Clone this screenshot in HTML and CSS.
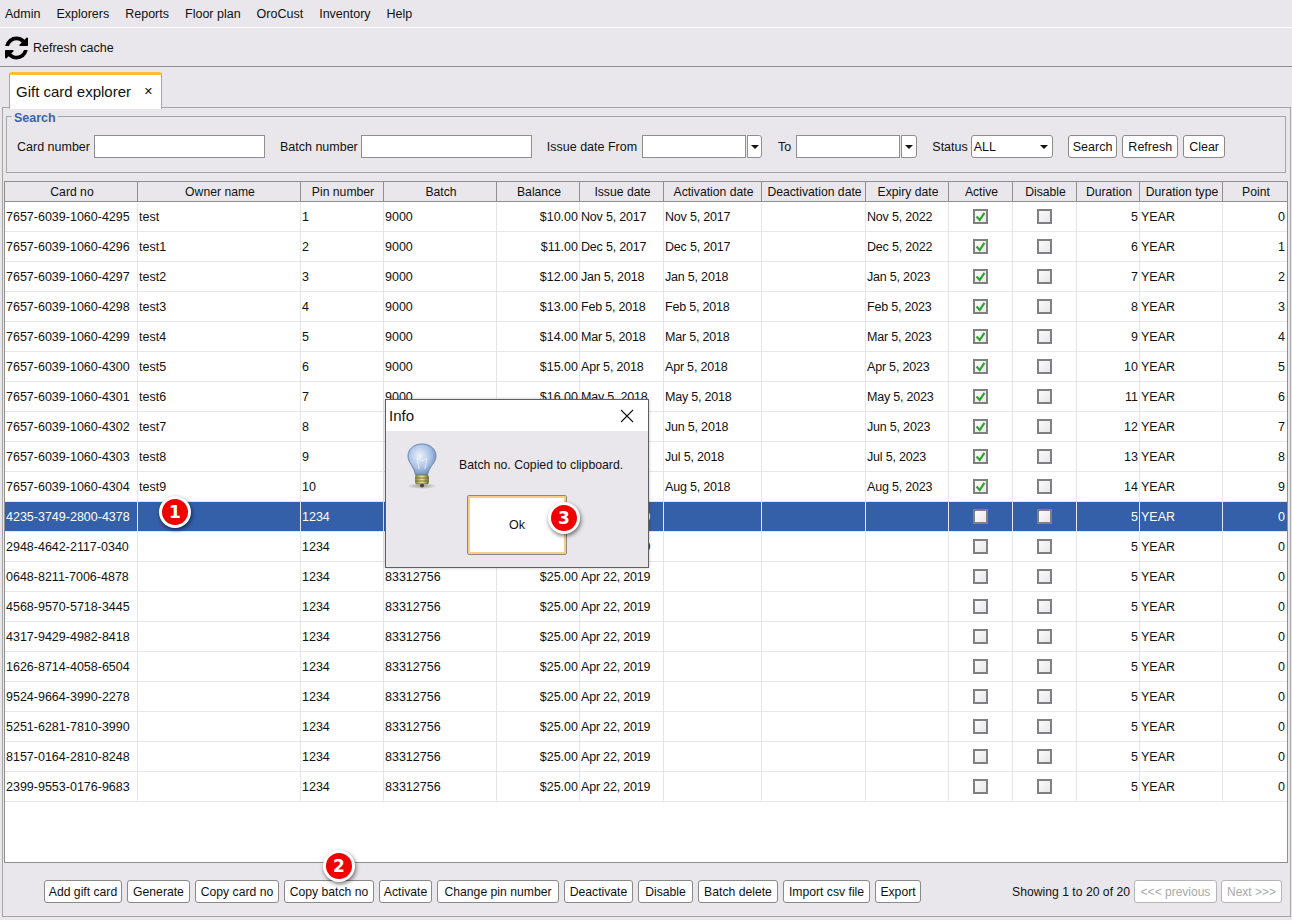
FILE: index.html
```html
<!DOCTYPE html>
<html>
  <head>
    <title>Gift card explorer</title>
    <link rel="stylesheet" href="styles.css">
  </head>
  <body>
    <svg class="defs" width="0" height="0">
      <symbol id="tick" viewBox="0 0 14 14">
        <path d="M2 7 L6 11.500 L12 2.500" fill="none" stroke="#2fa52f" stroke-width="2.8"/>
      </symbol>
    </svg>

    <div class="menubar">
      <span>Admin</span>
      <span>Explorers</span>
      <span>Reports</span>
      <span>Floor plan</span>
      <span>OroCust</span>
      <span>Inventory</span>
      <span>Help</span>
    </div>

    <div class="toolbar">
      <svg class="refresh-icon" viewBox="128 128 1536 1536">
        <path d="M1639 1056q0 5-1 7-64 268-268 434.5t-478 166.5q-146 0-282.5-55t-243.5-157l-129 129q-19 19-45 19t-45-19-19-45v-448q0-26 19-45t45-19h448q26 0 45 19t19 45-19 45l-137 137q71 66 161 102t187 36q134 0 250-65t186-179q11-17 53-117 8-23 30-23h192q13 0 22.5 9.5t9.5 22.5zm25-800v448q0 26-19 45t-45 19h-448q-26 0-45-19t-19-45 19-45l138-138q-148-137-349-137-134 0-250 65t-186 179q-11 17-53 117-8 23-30 23h-199q-13 0-22.5-9.5t-9.5-22.5v-7q65-268 270-434.5t480-166.5q146 0 284 55.5t245 156.5l130-129q19-19 45-19t45 19 19 45z"/>
      </svg>
      <span>Refresh cache</span>
    </div>

    <div class="tabs">
      <div class="tab">
        <span>Gift card explorer</span>
        <span class="tab-close">✕</span>
      </div>
    </div>

    <div class="tab-panel">
      <fieldset class="search">
        <legend>Search</legend>
        <div class="search-row">
          <label>Card number</label>
          <input type="text" class="input w-card">
          <label class="ml-15 tight">Batch number</label>
          <input type="text" class="input w-card">
          <label class="ml-15 loose">Issue date From</label>
          <div class="date-field">
            <input type="text" class="input w-date">
            <span class="drop"><i class="caret"></i></span>
          </div>
          <label class="ml-16 loose">To</label>
          <div class="date-field">
            <input type="text" class="input w-date">
            <span class="drop wide"><i class="caret"></i></span>
          </div>
          <label class="ml-15 tight">Status</label>
          <div class="select">ALL<i class="caret"></i></div>
          <button class="btn ml-15 btn-search">Search</button>
          <button class="btn">Refresh</button>
          <button class="btn">Clear</button>
        </div>
      </fieldset>

      <div class="table-box">
        <table class="grid">
          <colgroup>
            <col class="c1"><col class="c2"><col class="c3"><col class="c4"><col class="c5"><col class="c6"><col class="c7">
            <col class="c8"><col class="c9"><col class="c10"><col class="c11"><col class="c12"><col class="c13"><col class="c14">
          </colgroup>
          <thead>
            <tr>
              <th>Card no</th><th>Owner name</th><th>Pin number</th><th>Batch</th><th>Balance</th><th>Issue date</th><th>Activation date</th>
              <th>Deactivation date</th><th>Expiry date</th><th>Active</th><th>Disable</th><th>Duration</th><th>Duration type</th><th>Point</th>
            </tr>
          </thead>
          <tbody>
            <tr><td>7657-6039-1060-4295</td><td>test</td><td>1</td><td>9000</td><td class="r">$10.00</td><td class="d">Nov 5, 2017</td><td class="d">Nov 5, 2017</td><td></td><td class="d">Nov 5, 2022</td><td class="c"><span class="chk"><svg><use href="#tick"/></svg></span></td><td class="c"><span class="chk"></span></td><td class="r">5</td><td>YEAR</td><td class="r">0</td></tr>
            <tr><td>7657-6039-1060-4296</td><td>test1</td><td>2</td><td>9000</td><td class="r">$11.00</td><td class="d">Dec 5, 2017</td><td class="d">Dec 5, 2017</td><td></td><td class="d">Dec 5, 2022</td><td class="c"><span class="chk"><svg><use href="#tick"/></svg></span></td><td class="c"><span class="chk"></span></td><td class="r">6</td><td>YEAR</td><td class="r">1</td></tr>
            <tr><td>7657-6039-1060-4297</td><td>test2</td><td>3</td><td>9000</td><td class="r">$12.00</td><td class="d">Jan 5, 2018</td><td class="d">Jan 5, 2018</td><td></td><td class="d">Jan 5, 2023</td><td class="c"><span class="chk"><svg><use href="#tick"/></svg></span></td><td class="c"><span class="chk"></span></td><td class="r">7</td><td>YEAR</td><td class="r">2</td></tr>
            <tr><td>7657-6039-1060-4298</td><td>test3</td><td>4</td><td>9000</td><td class="r">$13.00</td><td class="d">Feb 5, 2018</td><td class="d">Feb 5, 2018</td><td></td><td class="d">Feb 5, 2023</td><td class="c"><span class="chk"><svg><use href="#tick"/></svg></span></td><td class="c"><span class="chk"></span></td><td class="r">8</td><td>YEAR</td><td class="r">3</td></tr>
            <tr><td>7657-6039-1060-4299</td><td>test4</td><td>5</td><td>9000</td><td class="r">$14.00</td><td class="d">Mar 5, 2018</td><td class="d">Mar 5, 2018</td><td></td><td class="d">Mar 5, 2023</td><td class="c"><span class="chk"><svg><use href="#tick"/></svg></span></td><td class="c"><span class="chk"></span></td><td class="r">9</td><td>YEAR</td><td class="r">4</td></tr>
            <tr><td>7657-6039-1060-4300</td><td>test5</td><td>6</td><td>9000</td><td class="r">$15.00</td><td class="d">Apr 5, 2018</td><td class="d">Apr 5, 2018</td><td></td><td class="d">Apr 5, 2023</td><td class="c"><span class="chk"><svg><use href="#tick"/></svg></span></td><td class="c"><span class="chk"></span></td><td class="r">10</td><td>YEAR</td><td class="r">5</td></tr>
            <tr><td>7657-6039-1060-4301</td><td>test6</td><td>7</td><td>9000</td><td class="r">$16.00</td><td class="d">May 5, 2018</td><td class="d">May 5, 2018</td><td></td><td class="d">May 5, 2023</td><td class="c"><span class="chk"><svg><use href="#tick"/></svg></span></td><td class="c"><span class="chk"></span></td><td class="r">11</td><td>YEAR</td><td class="r">6</td></tr>
            <tr><td>7657-6039-1060-4302</td><td>test7</td><td>8</td><td>9000</td><td class="r">$17.00</td><td class="d">Jun 5, 2018</td><td class="d">Jun 5, 2018</td><td></td><td class="d">Jun 5, 2023</td><td class="c"><span class="chk"><svg><use href="#tick"/></svg></span></td><td class="c"><span class="chk"></span></td><td class="r">12</td><td>YEAR</td><td class="r">7</td></tr>
            <tr><td>7657-6039-1060-4303</td><td>test8</td><td>9</td><td>9000</td><td class="r">$18.00</td><td class="d">Jul 5, 2018</td><td class="d">Jul 5, 2018</td><td></td><td class="d">Jul 5, 2023</td><td class="c"><span class="chk"><svg><use href="#tick"/></svg></span></td><td class="c"><span class="chk"></span></td><td class="r">13</td><td>YEAR</td><td class="r">8</td></tr>
            <tr><td>7657-6039-1060-4304</td><td>test9</td><td>10</td><td>9000</td><td class="r">$19.00</td><td class="d">Aug 5, 2018</td><td class="d">Aug 5, 2018</td><td></td><td class="d">Aug 5, 2023</td><td class="c"><span class="chk"><svg><use href="#tick"/></svg></span></td><td class="c"><span class="chk"></span></td><td class="r">14</td><td>YEAR</td><td class="r">9</td></tr>
            <tr class="selected"><td>4235-3749-2800-4378</td><td></td><td>1234</td><td>83312756</td><td class="r">$25.00</td><td class="d">Apr 22, 2019</td><td></td><td></td><td></td><td class="c"><span class="chk"></span></td><td class="c"><span class="chk"></span></td><td class="r">5</td><td>YEAR</td><td class="r">0</td></tr>
            <tr><td>2948-4642-2117-0340</td><td></td><td>1234</td><td>83312756</td><td class="r">$25.00</td><td class="d">Apr 22, 2019</td><td></td><td></td><td></td><td class="c"><span class="chk"></span></td><td class="c"><span class="chk"></span></td><td class="r">5</td><td>YEAR</td><td class="r">0</td></tr>
            <tr><td>0648-8211-7006-4878</td><td></td><td>1234</td><td>83312756</td><td class="r">$25.00</td><td class="d">Apr 22, 2019</td><td></td><td></td><td></td><td class="c"><span class="chk"></span></td><td class="c"><span class="chk"></span></td><td class="r">5</td><td>YEAR</td><td class="r">0</td></tr>
            <tr><td>4568-9570-5718-3445</td><td></td><td>1234</td><td>83312756</td><td class="r">$25.00</td><td class="d">Apr 22, 2019</td><td></td><td></td><td></td><td class="c"><span class="chk"></span></td><td class="c"><span class="chk"></span></td><td class="r">5</td><td>YEAR</td><td class="r">0</td></tr>
            <tr><td>4317-9429-4982-8418</td><td></td><td>1234</td><td>83312756</td><td class="r">$25.00</td><td class="d">Apr 22, 2019</td><td></td><td></td><td></td><td class="c"><span class="chk"></span></td><td class="c"><span class="chk"></span></td><td class="r">5</td><td>YEAR</td><td class="r">0</td></tr>
            <tr><td>1626-8714-4058-6504</td><td></td><td>1234</td><td>83312756</td><td class="r">$25.00</td><td class="d">Apr 22, 2019</td><td></td><td></td><td></td><td class="c"><span class="chk"></span></td><td class="c"><span class="chk"></span></td><td class="r">5</td><td>YEAR</td><td class="r">0</td></tr>
            <tr><td>9524-9664-3990-2278</td><td></td><td>1234</td><td>83312756</td><td class="r">$25.00</td><td class="d">Apr 22, 2019</td><td></td><td></td><td></td><td class="c"><span class="chk"></span></td><td class="c"><span class="chk"></span></td><td class="r">5</td><td>YEAR</td><td class="r">0</td></tr>
            <tr><td>5251-6281-7810-3990</td><td></td><td>1234</td><td>83312756</td><td class="r">$25.00</td><td class="d">Apr 22, 2019</td><td></td><td></td><td></td><td class="c"><span class="chk"></span></td><td class="c"><span class="chk"></span></td><td class="r">5</td><td>YEAR</td><td class="r">0</td></tr>
            <tr><td>8157-0164-2810-8248</td><td></td><td>1234</td><td>83312756</td><td class="r">$25.00</td><td class="d">Apr 22, 2019</td><td></td><td></td><td></td><td class="c"><span class="chk"></span></td><td class="c"><span class="chk"></span></td><td class="r">5</td><td>YEAR</td><td class="r">0</td></tr>
            <tr><td>2399-9553-0176-9683</td><td></td><td>1234</td><td>83312756</td><td class="r">$25.00</td><td class="d">Apr 22, 2019</td><td></td><td></td><td></td><td class="c"><span class="chk"></span></td><td class="c"><span class="chk"></span></td><td class="r">5</td><td>YEAR</td><td class="r">0</td></tr>
          </tbody>
        </table>
      </div>

      <div class="footer">
        <div class="actions">
          <button class="btn">Add gift card</button>
          <button class="btn">Generate</button>
          <button class="btn">Copy card no</button>
          <button class="btn">Copy batch no</button>
          <button class="btn">Activate</button>
          <button class="btn">Change pin number</button>
          <button class="btn">Deactivate</button>
          <button class="btn">Disable</button>
          <button class="btn">Batch delete</button>
          <button class="btn">Import csv file</button>
          <button class="btn">Export</button>
        </div>
        <div class="pager">
          <span>Showing 1 to 20 of 20</span>
          <button class="btn off">&lt;&lt;&lt; previous</button>
          <button class="btn off">Next &gt;&gt;&gt;</button>
        </div>
      </div>
    </div>

    <!-- Info dialog on top of the table -->
    <div class="dialog">
      <div class="dialog-title">
        <span>Info</span>
        <svg class="dialog-close" viewBox="0 0 14 14">
          <path d="M1 1 L13 13 M13 1 L1 13" stroke="#111" stroke-width="1.1" fill="none"/>
        </svg>
      </div>
      <div class="dialog-body">
        <div class="dialog-msg">
          <svg class="bulb" viewBox="0 0 32 46">
            <defs>
              <radialGradient id="glass" cx="0.42" cy="0.38" r="0.65">
                <stop offset="0" stop-color="#eef3fa"/>
                <stop offset="0.6" stop-color="#a9c2e6"/>
                <stop offset="1" stop-color="#6f8db8"/>
              </radialGradient>
              <linearGradient id="base" x1="0" x2="1" y1="0" y2="0">
                <stop offset="0" stop-color="#8d8a3c"/>
                <stop offset="0.5" stop-color="#e4e09a"/>
                <stop offset="1" stop-color="#77742f"/>
              </linearGradient>
              <radialGradient id="floor">
                <stop offset="0" stop-color="#777" stop-opacity="0.7"/>
                <stop offset="1" stop-color="#777" stop-opacity="0"/>
              </radialGradient>
            </defs>
            <ellipse cx="16" cy="43" rx="15" ry="3" fill="url(#floor)"/>
            <path d="M16 1 C7 1 2 7 2 13 C2 20 8 23 9.500 32 L21.500 32 C23 23 30 20 30 13 C30 7 25 1 16 1 Z" fill="url(#glass)" stroke="#6d86a8" stroke-width="1"/>
            <path d="M11 15 L13 26 M21 15 L19 26 M11 15 L16 18 L21 15" stroke="#f4f6fa" stroke-width="0.8" fill="none"/>
            <rect x="9.500" y="32" width="13" height="9" rx="1.500" fill="url(#base)" stroke="#5f5d28" stroke-width="0.5"/>
            <path d="M9.500 35 H22.500 M9.500 38 H22.500" stroke="#5f5d28" stroke-width="0.7"/>
            <circle cx="16" cy="42.500" r="2" fill="#444"/>
          </svg>
          <span class="dialog-text">Batch no. Copied to clipboard.</span>
        </div>
        <button class="ok-btn">Ok</button>
      </div>
    </div>

    <span class="badge badge-1">1</span>
    <span class="badge badge-2">2</span>
    <span class="badge badge-3">3</span>
  </body>
</html>
```

FILE: styles.css
```css
* {
  box-sizing: border-box;
}
html,
body {
  height: 100%;
}
body {
  margin: 0;
  position: relative;
  display: flex;
  flex-direction: column;
  height: 920px;
  overflow: hidden;
  background: #e9e7ec;
  color: #111;
  font-family: "Liberation Sans", Arial, sans-serif;
  font-size: 12.5px;
}
.defs {
  position: absolute;
}

.menubar {
  display: flex;
  align-items: center;
  gap: 16px;
  height: 28px;
  padding-left: 5px;
  border-bottom: 1px solid #fff;
}
.toolbar {
  display: flex;
  align-items: center;
  gap: 5px;
  height: 39px;
  padding: 2px 0 0 5px;
  border-bottom: 1px solid #8f8f8f;
}
.refresh-icon {
  width: 23px;
  height: 24px;
}

.tabs {
  height: 41px;
  padding: 5px 0 0 9px;
}
.tab {
  display: flex;
  align-items: center;
  justify-content: space-between;
  position: relative;
  z-index: 1;
  width: 153px;
  height: 37px;
  padding: 0 8px 2px 6px;
  background: #fff;
  border: 1px solid #a6a6a6;
  border-top: 3px solid #fcc02e;
  border-bottom: none;
  border-radius: 3px 3px 0 0;
  font-size: 15px;
}
.tab-close {
  font-family: "DejaVu Sans", sans-serif;
  font-size: 11px;
}

.tab-panel {
  flex: 1;
  display: flex;
  flex-direction: column;
  margin: -1px 1px 3px 2px;
  border: 1px solid #a6a6a6;
}

.search {
  margin: 0 4px 0 3px;
  padding: 0 0 0 10px;
  min-width: 0;
  border: 1px solid #a6a6a6;
}
.search legend {
  margin-left: -5px;
  padding: 3px 2px 0;
  color: #3f62ae;
  font-size: 12.5px;
  font-weight: bold;
  line-height: 14px;
}
.search-row {
  display: flex;
  align-items: center;
  height: 47px;
  padding-bottom: 4px;
}
.search-row label {
  margin-right: 4px;
}
.search-row label.tight {
  margin-right: 3px;
}
.search-row label.loose {
  margin-right: 5px;
}
.ml-15 {
  margin-left: 15px;
}
.ml-16 {
  margin-left: 16px;
}
.input {
  height: 23px;
  padding: 0 3px;
  background: #fff;
  border: 1px solid #8f8f8f;
  outline: none;
}
.w-card {
  width: 171px;
}
.w-date {
  width: 104px;
}
.date-field {
  display: flex;
  gap: 1px;
}
.drop {
  display: flex;
  align-items: center;
  justify-content: center;
  width: 15px;
  height: 23px;
  background: #fff;
  border: 1px solid #8f8f8f;
  border-radius: 0 3px 3px 0;
}
.drop.wide {
  width: 16px;
}
.caret {
  width: 0;
  height: 0;
  border-left: 4px solid transparent;
  border-right: 4px solid transparent;
  border-top: 4px solid #111;
}
.select {
  display: flex;
  align-items: center;
  justify-content: space-between;
  width: 82px;
  height: 23px;
  padding: 0 4px 0 2px;
  background: #fff;
  border: 1px solid #8f8f8f;
  border-radius: 3px;
}
.select .caret {
  border-left-width: 4.500px;
  border-right-width: 4.500px;
}

.btn {
  height: 23px;
  padding: 0 5px;
  background: #fff;
  border: 1px solid #8a8a8a;
  border-radius: 3px;
  color: #111;
  font-family: "Liberation Sans", Arial, sans-serif;
  font-size: 12px;
  white-space: nowrap;
}
.search-row .btn {
  margin-right: 5px;
  font-size: 12.5px;
}
.search-row .btn-search {
  padding: 0 4px;
}
.btn.off {
  border-color: #b5b5b5;
  color: #a9a9a9;
}

.table-box {
  flex: 1;
  margin: 8px 2px 0 1px;
  background: #fff;
  border: 1px solid #8f8f8f;
  overflow: hidden;
}
.grid {
  width: 1283px;
  table-layout: fixed;
  border-collapse: separate;
  border-spacing: 0;
}
.c1 { width: 133px; }
.c2 { width: 163px; }
.c3 { width: 83px; }
.c4 { width: 113px; }
.c5 { width: 83px; }
.c6 { width: 84px; }
.c7 { width: 98px; }
.c8 { width: 104px; }
.c9 { width: 83px; }
.c10 { width: 64px; }
.c11 { width: 64px; }
.c12 { width: 63px; }
.c13 { width: 83px; }
.c14 { width: 65px; }
.grid th {
  height: 20px;
  padding: 1px 0 0 2px;
  background: #e9e7ec;
  border-right: 1px solid #8f8f8f;
  border-bottom: 1px solid #8f8f8f;
  font-size: 12.2px;
  font-weight: normal;
  white-space: nowrap;
}
.grid td {
  height: 30px;
  padding: 0 1px;
  border-right: 1px solid #e6e6e6;
  border-bottom: 1px solid #e6e6e6;
  white-space: nowrap;
  overflow: hidden;
}
.grid td.r {
  padding-right: 1px;
  text-align: right;
}
.grid td.r:last-child {
  padding-right: 2px;
}
.grid td.c {
  text-align: center;
}
.grid td.d {
  letter-spacing: -0.2px;
}
.grid .selected td {
  background: #3360a9;
  color: #fff;
}
.chk {
  display: inline-block;
  width: 15px;
  height: 15px;
  vertical-align: middle;
  background: linear-gradient(135deg, #fafafa, #e8e8ec);
  border: 2px solid #808080;
}
.chk svg {
  display: block;
  width: 11px;
  height: 11px;
}

.footer {
  display: flex;
  align-items: center;
  justify-content: space-between;
  height: 53px;
  padding: 4px 8px 0 41px;
}
.actions,
.pager {
  display: flex;
  align-items: center;
  gap: 5px;
}
.actions .btn {
  padding: 0;
  font-size: 12.2px;
}
.actions .btn:nth-child(1) { width: 78px; }
.actions .btn:nth-child(2) { width: 63px; }
.actions .btn:nth-child(3) { width: 84px; }
.actions .btn:nth-child(4) { width: 90px; }
.actions .btn:nth-child(5) { width: 53px; }
.actions .btn:nth-child(6) { width: 122px; }
.actions .btn:nth-child(7) { width: 69px; }
.actions .btn:nth-child(8) { width: 55px; }
.actions .btn:nth-child(9) { width: 80px; }
.actions .btn:nth-child(10) { width: 87px; }
.actions .btn:nth-child(11) { width: 46px; }
.pager {
  gap: 4px;
  font-size: 12.2px;
}
.pager .btn:first-of-type {
  width: 83px;
}

/* dialog and numbered markers sit over the table */
.dialog {
  position: absolute;
  left: 385px;
  top: 399px;
  width: 264px;
  height: 169px;
  background: #e9e7ec;
  border: 1px solid #5f5f5f;
  box-shadow: 0 0 3px rgba(0, 0, 0, 0.25);
}
.dialog-title {
  display: flex;
  align-items: center;
  justify-content: space-between;
  height: 31px;
  padding: 0 14px 0 3px;
  background: #fff;
  font-size: 15px;
}
.dialog-close {
  width: 14px;
  height: 14px;
}
.dialog-body {
  display: flex;
  flex-direction: column;
  align-items: center;
}
.dialog-msg {
  display: flex;
  align-items: center;
  gap: 21px;
  width: 100%;
  height: 64px;
  padding: 6px 0 0 20px;
}
.dialog-text {
  margin-top: -2px;
  font-size: 12.25px;
}
.bulb {
  width: 32px;
  height: 46px;
}
.ok-btn {
  width: 100px;
  height: 60px;
  background: #fff;
  border: 1px solid #8a8a8a;
  border-radius: 2px;
  box-shadow: inset 0 0 0 2px #f6cf85;
  color: #111;
  font-family: "Liberation Sans", Arial, sans-serif;
  font-size: 12.5px;
}

.badge {
  position: absolute;
  width: 32px;
  height: 32px;
  background: #f00000;
  border: 3px solid #fff;
  border-radius: 50%;
  box-shadow: 1px 2px 4px rgba(0, 0, 0, 0.55);
  color: #fff;
  font-family: "DejaVu Sans", sans-serif;
  font-size: 17px;
  font-weight: bold;
  line-height: 26px;
  text-align: center;
}
.badge-1 {
  left: 159px;
  top: 496px;
}
.badge-2 {
  left: 323px;
  top: 850px;
}
.badge-3 {
  left: 548px;
  top: 502px;
}
```
